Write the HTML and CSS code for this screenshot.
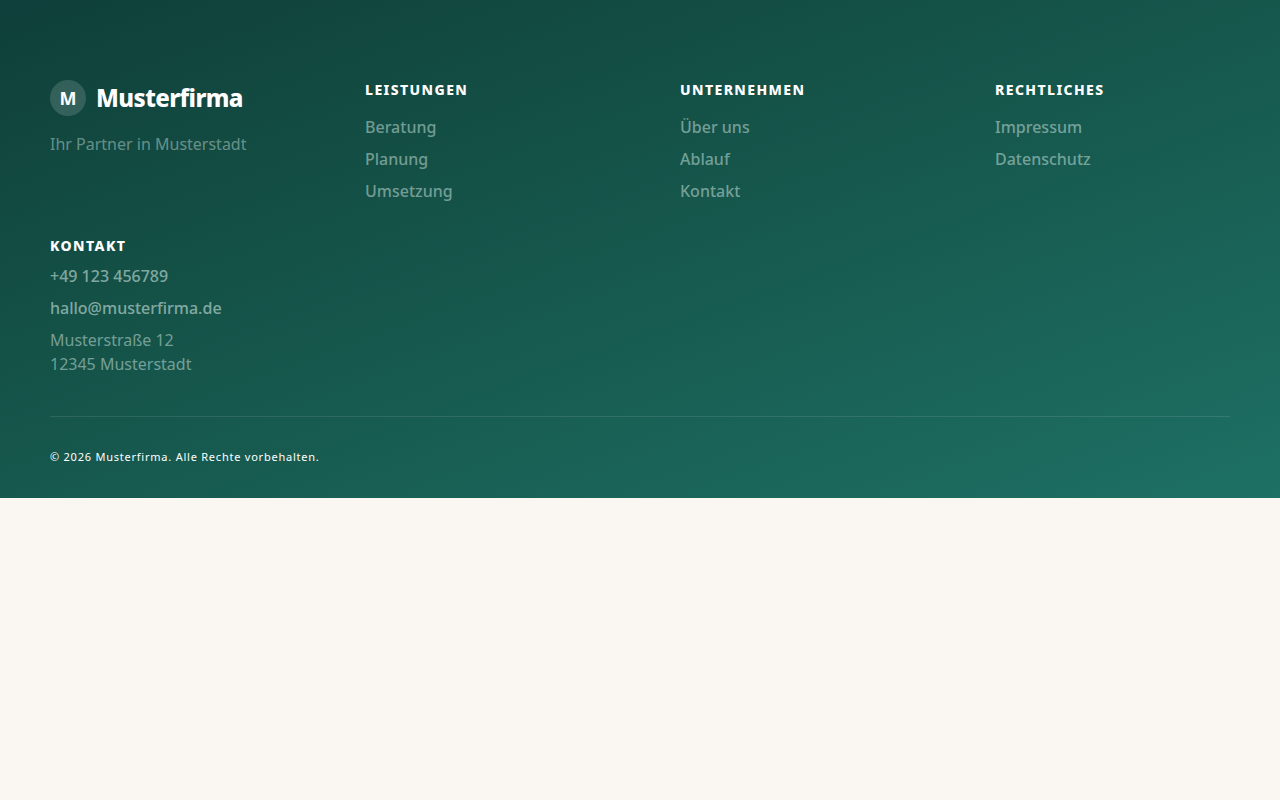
FILE: index.html
```html
<!DOCTYPE html>
<html lang="de">
<head>
<meta charset="utf-8">
<meta name="viewport" content="width=device-width, initial-scale=1">
<title>Musterfirma</title>
<link rel="stylesheet" href="styles.css">
</head>
<body>
<footer class="footer">
  <div class="container">
    <div class="grid">
      <div class="brand">
        <a class="logo" href="#"><span class="mark">M</span><span class="name">Musterfirma</span></a>
        <p class="tagline">Ihr Partner in Musterstadt</p>
      </div>
      <nav aria-labelledby="leistungen">
        <h2 class="title" id="leistungen">Leistungen</h2>
        <ul class="links">
          <li><a href="#">Beratung</a></li>
          <li><a href="#">Planung</a></li>
          <li><a href="#">Umsetzung</a></li>
        </ul>
      </nav>
      <nav aria-labelledby="unternehmen">
        <h2 class="title" id="unternehmen">Unternehmen</h2>
        <ul class="links">
          <li><a href="#">Über uns</a></li>
          <li><a href="#">Ablauf</a></li>
          <li><a href="#">Kontakt</a></li>
        </ul>
      </nav>
      <nav aria-labelledby="rechtliches">
        <h2 class="title" id="rechtliches">Rechtliches</h2>
        <ul class="links">
          <li><a href="#">Impressum</a></li>
          <li><a href="#">Datenschutz</a></li>
        </ul>
      </nav>
      <address class="contact">
        <h2 class="title">Kontakt</h2>
        <a href="tel:+49123456789">+49 123 456789</a>
        <a href="mailto:hallo@musterfirma.de">hallo@musterfirma.de</a>
        <p class="street">Musterstraße 12<br>12345 Musterstadt</p>
      </address>
    </div>
    <div class="bottom">
      <p>© 2026 Musterfirma. Alle Rechte vorbehalten.</p>
    </div>
  </div>
</footer>
</body>
</html>
```
FILE: styles.css
```css
* {
  box-sizing: border-box;
  margin: 0;
  padding: 0;
}

body {
  background: #faf7f2;
  color: #fff;
  font: 16px/24px "Noto Sans", sans-serif;
}

a {
  color: inherit;
  text-decoration: none;
}

.footer {
  padding: 80px 50px 31px;
  background: linear-gradient(160deg, #0f3f3a 0%, #134e44 30%, #1e7064 100%);
}

.container {
  max-width: 1180px;
  margin: 0 auto;
}

.grid {
  display: grid;
  grid-template-columns: repeat(auto-fit, minmax(220px, 1fr));
  gap: 33px 80px;
}

.logo {
  display: flex;
  align-items: center;
  gap: 10px;
  margin-bottom: 16px;
}

.mark {
  display: grid;
  place-items: center;
  width: 36px;
  height: 36px;
  border-radius: 50%;
  background: rgba(255, 255, 255, 0.15);
  font-size: 18px;
  font-weight: 700;
}

.name {
  font-size: 24px;
  font-weight: 800;
  letter-spacing: -0.025em;
}

.tagline {
  color: rgba(235, 255, 250, 0.4);
}

.title {
  font-size: 14px;
  line-height: 20px;
  font-weight: 800;
  letter-spacing: 0.1em;
  text-transform: uppercase;
}

.links {
  display: grid;
  gap: 8px;
  margin-top: 15px;
  list-style: none;
  color: rgba(235, 255, 250, 0.45);
  font-weight: 500;
}

.contact {
  display: grid;
  gap: 8px;
  color: rgba(235, 255, 250, 0.45);
  font-style: normal;
}

.contact .title {
  color: #fff;
}

.contact a {
  color: rgba(235, 255, 250, 0.52);
  font-weight: 500;
}

.bottom {
  margin-top: 40px;
  padding-top: 30px;
  border-top: 1px solid rgba(255, 255, 255, 0.1);
  font-size: 11px;
  line-height: 20px;
  letter-spacing: 0.07em;
}
```
